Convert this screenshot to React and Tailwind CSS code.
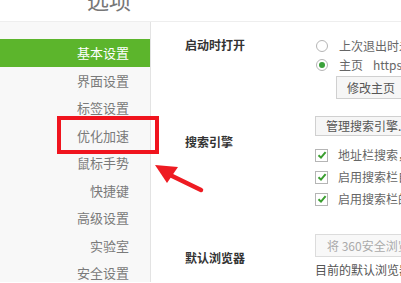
import React from 'react';

const menu = ['基本设置', '界面设置', '标签设置', '优化加速', '鼠标手势', '快捷键', '高级设置', '实验室', '安全设置'];

const Radio = ({ checked }) => (
  <span className="w-[12px] h-[12px] rounded-full border border-[#b5b5b5] bg-white flex items-center justify-center shrink-0">
    {checked && <span className="w-[6px] h-[6px] rounded-full bg-[#3aa13a]" />}
  </span>
);

const Check = () => (
  <span className="w-[13px] h-[13px] border border-[#b5b5b5] bg-white flex items-center justify-center shrink-0">
    <svg width="10" height="10" viewBox="0 0 10 10">
      <path d="M1.5 5.2 L4 7.6 L8.6 2.2" fill="none" stroke="#3a9e2f" strokeWidth="2" />
    </svg>
  </span>
);

const App = () => {
  return (
    <div className="w-[401px] h-[283px] overflow-hidden bg-white relative text-[12px] text-[#666]" style={{ fontFamily: '"Noto Sans CJK SC", "Noto Sans", sans-serif' }}>
      <div className="h-[22px] overflow-hidden border-b border-[#eeeeee]">
        <div className="pl-[87px] mt-[-13px] text-[22px] leading-[24px] text-[#777]">选项</div>
      </div>
      <div className="flex h-[260px]">
        <div className="w-[151px] shrink-0 bg-[#f8f8f8] border-r border-[#e3e3e3] pt-[17px]">
          {menu.map((m, i) => (
            <div
              key={m}
              className={`h-[27.5px] flex items-center justify-end pr-[21px] text-[13px] ${i === 0 ? 'bg-[#5cb52c] text-white' : 'text-[#7a7a7a]'}`}
            >
              {m}
            </div>
          ))}
        </div>
        <div className="flex-1 pl-[34px] overflow-hidden">
          <div className="flex pt-[16px]">
            <div className="w-[131px] shrink-0 font-bold text-[#333] leading-[14px]">启动时打开</div>
            <div className="flex flex-col whitespace-nowrap">
              <div className="flex items-center gap-[11px] h-[14px] mt-[1px]">
                <Radio />
                <span>上次退出时未关闭的页面</span>
              </div>
              <div className="flex items-center gap-[11px] h-[14px] mt-[5px]">
                <Radio checked />
                <span>主页<span className="ml-[10px]">https://hao.360.cn</span></span>
              </div>
              <div className="ml-[20px] mt-[4px] h-[23px] w-[80px] border border-[#d0d0d0] bg-[#f6f6f6] flex items-center pl-[10px] text-[#555]">修改主页</div>
            </div>
          </div>

          <div className="flex mt-[17px]">
            <div className="w-[130px] shrink-0 font-bold text-[#333] leading-[14px] pt-[19px]">搜索引擎</div>
            <div className="flex flex-col whitespace-nowrap">
              <div className="h-[20px] w-[90px] border border-[#d0d0d0] bg-[#f6f6f6] flex items-center pl-[10px] text-[#555]">管理搜索引擎...</div>
              <div className="flex items-center gap-[10px] h-[14px] mt-[12px]"><Check /><span>地址栏搜索，使用默认搜索引擎</span></div>
              <div className="flex items-center gap-[10px] h-[14px] mt-[8px]"><Check /><span>启用搜索栏自动完成</span></div>
              <div className="flex items-center gap-[10px] h-[14px] mt-[8px]"><Check /><span>启用搜索栏的搜索建议</span></div>
            </div>
          </div>

          <div className="flex mt-[28px]">
            <div className="w-[130px] shrink-0 font-bold text-[#333] leading-[14px] pt-[17px]">默认浏览器</div>
            <div className="flex flex-col whitespace-nowrap">
              <div className="h-[23px] w-[110px] border border-[#dcdcdc] bg-[#f8f8f8] flex items-center pl-[11px] text-[#aaa]">将 360安全浏览器设置为默认</div>
              <div className="mt-[6px] leading-[14px] text-[#555]">目前的默认浏览器是</div>
            </div>
          </div>
        </div>
      </div>

      <div className="absolute left-[57px] top-[116px] w-[102px] h-[38px] border-[4px] border-[#f0141e]" />
      <svg className="absolute left-0 top-0" width="401" height="283" viewBox="0 0 401 283">
        <line x1="201" y1="190" x2="168" y2="174" stroke="#ee1b22" strokeWidth="4.5" strokeLinecap="round" />
        <polygon points="155,165 178,167 167,183" fill="#ee1b22" />
      </svg>
    </div>
  );
};

export default App;
